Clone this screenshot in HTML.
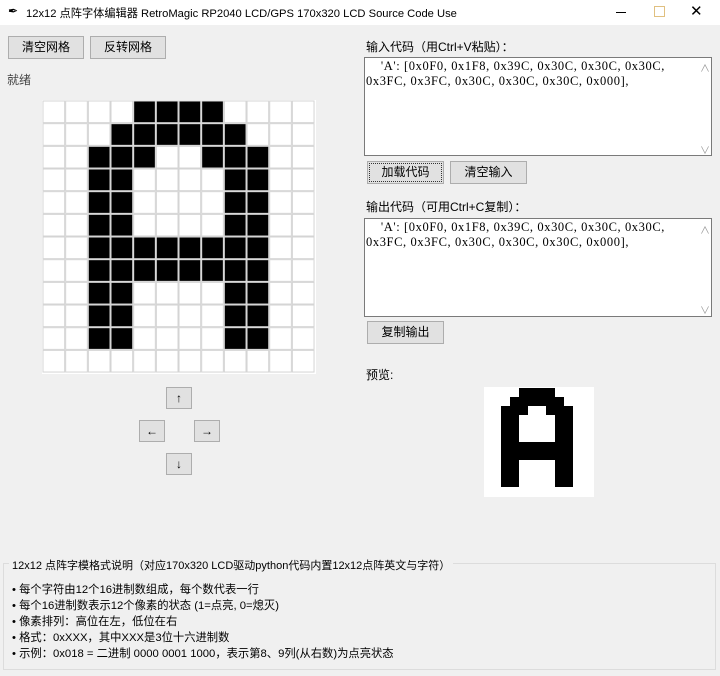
<!DOCTYPE html>
<html><head><meta charset="utf-8"><style>
body{margin:0;width:720px;height:676px;background:#f0f0f0;position:relative;overflow:hidden;font-family:"Liberation Sans","Noto Sans CJK SC",sans-serif;font-size:12px;color:#000}
.a{position:absolute}
.btn{position:absolute;background:#e1e1e1;border:1px solid #adadad;box-sizing:border-box;text-align:center;font-size:12px;line-height:20px}
.ta{position:absolute;background:#fff;border:1px solid #7a7a7a;box-sizing:border-box;font-family:"Liberation Serif","Noto Serif CJK SC",serif;font-size:12.5px;letter-spacing:0.6px;line-height:15px;padding:1px 1px;white-space:pre}
.sb{position:absolute;color:#999;font-size:10px}
</style></head><body>
<div class="a" style="left:0;top:0;width:720px;height:25px;background:#fff"></div>
<div class="a" style="left:8px;top:4px;font-size:12px">&#x2712;</div>
<div class="a" style="left:26px;top:5px;font-size:11.2px">12x12 点阵字体编辑器 RetroMagic RP2040 LCD/GPS 170x320 LCD Source Code Use</div>
<div class="a" style="left:616px;top:12px;width:10px;height:1px;background:#000"></div>
<div class="a" style="left:654px;top:6px;width:9px;height:9px;border:1px solid #e0c080"></div>
<div class="a" style="left:690px;top:2px;font-size:15px">✕</div>

<div class="btn" style="left:8px;top:36px;width:76px;height:23px">清空网格</div>
<div class="btn" style="left:90px;top:36px;width:76px;height:23px">反转网格</div>
<div class="a" style="left:7px;top:71px;color:#444">就绪</div>

<svg class="a" style="left:42px;top:100px" width="275" height="275">
<rect x="0" y="0" width="274" height="274" fill="#fff"/>
<g fill="#000" id="g"></g>
</svg>

<div class="btn" style="left:166px;top:387px;width:26px;height:22px">↑</div>
<div class="btn" style="left:139px;top:420px;width:26px;height:22px">←</div>
<div class="btn" style="left:194px;top:420px;width:26px;height:22px">→</div>
<div class="btn" style="left:166px;top:453px;width:26px;height:22px">↓</div>

<div class="a" style="left:366px;top:38px">输入代码（用Ctrl+V粘贴）：</div>
<div class="ta" style="left:364px;top:57px;width:348px;height:99px">    'A': [0x0F0, 0x1F8, 0x39C, 0x30C, 0x30C, 0x30C,
0x3FC, 0x3FC, 0x30C, 0x30C, 0x30C, 0x000],</div>
<div class="sb" style="left:700px;top:60px">∧</div>
<div class="sb" style="left:700px;top:142px">∨</div>
<div class="btn" style="left:367px;top:161px;width:77px;height:23px;outline:1px dotted #333;outline-offset:-3px">加载代码</div>
<div class="btn" style="left:450px;top:161px;width:77px;height:23px">清空输入</div>

<div class="a" style="left:366px;top:198px">输出代码（可用Ctrl+C复制）：</div>
<div class="ta" style="left:364px;top:218px;width:348px;height:99px">    'A': [0x0F0, 0x1F8, 0x39C, 0x30C, 0x30C, 0x30C,
0x3FC, 0x3FC, 0x30C, 0x30C, 0x30C, 0x000],</div>
<div class="sb" style="left:700px;top:222px">∧</div>
<div class="sb" style="left:700px;top:302px">∨</div>
<div class="btn" style="left:367px;top:321px;width:77px;height:23px">复制输出</div>

<div class="a" style="left:366px;top:366px">预览:</div>
<svg class="a" style="left:483px;top:387px" width="111" height="111"><rect x="1" y="0" width="110" height="110" fill="#fff"/><g fill="#000" id="p"></g></svg>

<div class="a" style="left:3px;top:563px;width:713px;height:107px;border:1px solid #dcdcdc;box-sizing:border-box"></div>
<div class="a" style="left:9px;top:557px;background:#f0f0f0;padding:0 3px;font-size:11px">12x12 点阵字模格式说明（对应170x320 LCD驱动python代码内置12x12点阵英文与字符）</div>
<div class="a" style="left:12px;top:582px;line-height:16px;font-size:11.3px">• 每个字符由12个16进制数组成，每个数代表一行<br>• 每个16进制数表示12个像素的状态 (1=点亮, 0=熄灭)<br>• 像素排列：高位在左，低位在右<br>• 格式：0xXXX，其中XXX是3位十六进制数<br>• 示例：0x018 = 二进制 0000 0001 1000，表示第8、9列(从右数)为点亮状态</div>

<script>
var rows=[0x0F0,0x1F8,0x39C,0x30C,0x30C,0x30C,0x3FC,0x3FC,0x30C,0x30C,0x30C,0x000];
var s=22.67,g='',p='';
for(var r=0;r<12;r++)for(var c=0;c<12;c++){
 var on=(rows[r]>>(11-c))&1;
 g+='<rect x="'+(1+c*s)+'" y="'+(1+r*s)+'" width="'+(s-1)+'" height="'+(s-1)+'" fill="'+(on?'#000':'#fff')+'" stroke="#d4d4d4" stroke-width="1"/>';
 if(on)p+='<rect x="'+(c*9)+'" y="'+(1+r*9)+'" width="9" height="9"/>';
}
document.getElementById('g').innerHTML=g;
document.getElementById('p').innerHTML=p;
</script>
</body></html>
